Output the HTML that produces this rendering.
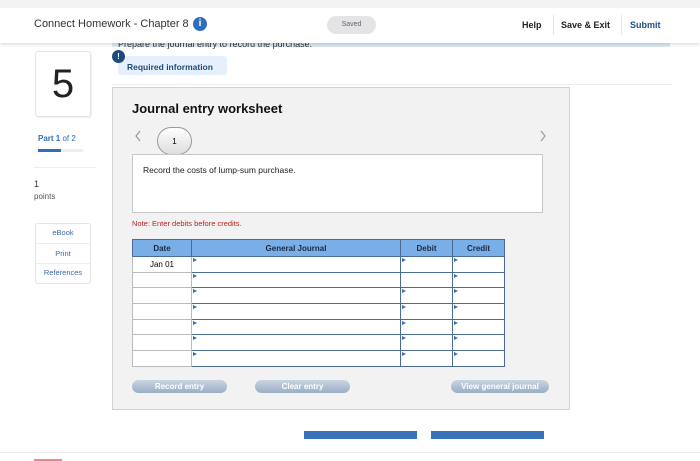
<!DOCTYPE html>
<html><head><style>
*{box-sizing:border-box;margin:0;padding:0}
body{width:700px;height:461px;overflow:hidden;background:#fff;font-family:"Liberation Sans",sans-serif;position:relative}
.a{position:absolute}
.hdr{left:0;top:0;width:700px;height:43px;background:#fff;border-top:8px solid #f3f3f3;box-shadow:0 2px 3px rgba(0,0,0,.12);z-index:2}
td{border:1px solid #4a6b94;height:15.7px;padding:0;position:relative;background:#fff}
td:not(:first-child){border-width:1.5px}
.tri{position:absolute;left:1px;top:1px;width:0;height:0;border-left:4px solid #3b6fb0;border-top:2px solid transparent;border-bottom:2px solid transparent}
.btn{height:13px;border-radius:7px;background:linear-gradient(#c9d4e2,#9aaec6);color:#fff;font-size:8px;font-weight:bold;text-align:center;line-height:13px}
</style></head><body>
<div class="a hdr">
 <div class="a" style="left:34px;top:10px;font-size:11px;color:#333">Connect Homework - Chapter 8</div>
 <div class="a" style="left:193px;top:9px;width:14px;height:14px;border-radius:50%;background:#2f6fba;color:#fff;font-size:10px;font-weight:bold;text-align:center;line-height:14px">i</div>
 <div class="a" style="left:327px;top:8px;width:49px;height:18px;border-radius:9px;background:#e4e4e6;color:#666;font-size:7px;text-align:center;line-height:18px">Saved</div>
 <div class="a" style="left:522px;top:12px;font-size:9px;font-weight:bold;color:#222">Help</div>
 <div class="a" style="left:553px;top:7px;width:1px;height:20px;background:#e5e5e5"></div>
 <div class="a" style="left:561px;top:12px;font-size:9px;font-weight:bold;color:#222">Save &amp; Exit</div>
 <div class="a" style="left:621px;top:7px;width:1px;height:20px;background:#e5e5e5"></div>
 <div class="a" style="left:630px;top:12px;font-size:9px;font-weight:bold;color:#1f4f8a">Submit</div>
</div>
<div class="a" style="left:112px;top:41px;width:558px;height:6px;background:#dbe9f6"></div>
<div class="a" style="left:118px;top:39px;font-size:9px;color:#333">Prepare the journal entry to record the purchase.</div>
<div class="a" style="left:118px;top:56px;width:109px;height:19px;background:#e6f0fa;border-radius:3px;font-size:8.5px;font-weight:bold;color:#1f4a7e;padding:6px 0 0 9px">Required information</div>
<div class="a" style="left:112px;top:50px;width:13px;height:13px;border-radius:50%;background:#1f4a7e;color:#fff;font-size:8px;font-weight:bold;text-align:center;line-height:13px">!</div>
<div class="a" style="left:112px;top:84px;width:560px;height:1px;background:#eee"></div>
<div class="a" style="left:35px;top:51px;width:56px;height:66px;border:1px solid #e4e4e4;border-radius:3px;box-shadow:1px 1px 1px #eee;font-size:40px;color:#222;text-align:center;line-height:64px">5</div>
<div class="a" style="left:38px;top:134px;font-size:8px;color:#2f6fba"><b>Part 1</b> of 2</div>
<div class="a" style="left:38px;top:149px;width:45px;height:3px;background:#eee"></div>
<div class="a" style="left:38px;top:149px;width:23px;height:3px;background:#2f6fba"></div>
<div class="a" style="left:34px;top:167px;width:62px;height:1px;background:#eee"></div>
<div class="a" style="left:34px;top:179px;font-size:9px;color:#333">1</div>
<div class="a" style="left:34px;top:192px;font-size:8px;color:#555">points</div>
<div class="a" style="left:35px;top:223px;width:56px;height:61px;border:1px solid #e4e4e4;border-radius:3px;font-size:7.5px;color:#3a6aa8;text-align:center">
 <div style="height:20px;line-height:18px;border-bottom:1px solid #eee">eBook</div>
 <div style="height:20px;line-height:20px;border-bottom:1px solid #eee">Print</div>
 <div style="line-height:18px">References</div>
</div>
<div class="a" style="left:112px;top:87px;width:458px;height:323px;background:#f2f2f2;border:1px solid #d3d3d3"></div>
<div class="a" style="left:132px;top:101px;font-size:13px;font-weight:bold;color:#111">Journal entry worksheet</div>
<svg class="a" style="left:134px;top:130px" width="8" height="12"><path d="M6 1L2 6l4 5" fill="none" stroke="#999" stroke-width="1.2"/></svg>
<svg class="a" style="left:539px;top:130px" width="8" height="12"><path d="M2 1l4 5-4 5" fill="none" stroke="#999" stroke-width="1.2"/></svg>
<div class="a" style="left:157px;top:127px;width:35px;height:28px;border-radius:14px;border:1px solid #999;background:linear-gradient(#fff,#ddd);font-size:8px;text-align:center;line-height:28px">1</div>
<div class="a" style="left:132px;top:154px;width:411px;height:59px;background:#fff;border:1px solid #c8c8c8;font-size:8.5px;color:#222;padding:10px 0 0 10px">Record the costs of lump-sum purchase.</div>
<div class="a" style="left:132px;top:219px;font-size:7.5px;color:#b22">Note: Enter debits before credits.</div>
<table class="a" style="left:132px;top:239px;width:373px;border-collapse:collapse;font-size:8px">
<tr style="background:#7aaee6"><th style="width:59px;height:17px;border:1px solid #4a6b94;color:#1a2a44">Date</th><th style="width:209px;border:1px solid #4a6b94;color:#1a2a44">General Journal</th><th style="width:52px;border:1px solid #4a6b94;color:#1a2a44">Debit</th><th style="border:1px solid #4a6b94;color:#1a2a44">Credit</th></tr>
<tr><td style="text-align:center;border-color:#bbb">Jan 01</td><td><i class="tri"></i></td><td><i class="tri"></i></td><td><i class="tri"></i></td></tr>
<tr><td style="border-color:#bbb"></td><td><i class="tri"></i></td><td></td><td><i class="tri"></i></td></tr>
<tr><td style="border-color:#bbb"></td><td><i class="tri"></i></td><td><i class="tri"></i></td><td><i class="tri"></i></td></tr>
<tr><td style="border-color:#bbb"></td><td><i class="tri"></i></td><td><i class="tri"></i></td><td><i class="tri"></i></td></tr>
<tr><td style="border-color:#bbb"></td><td><i class="tri"></i></td><td><i class="tri"></i></td><td><i class="tri"></i></td></tr>
<tr><td style="border-color:#bbb"></td><td><i class="tri"></i></td><td><i class="tri"></i></td><td><i class="tri"></i></td></tr>
<tr><td style="border-color:#bbb"></td><td><i class="tri"></i></td><td><i class="tri"></i></td><td><i class="tri"></i></td></tr>
</table>
<div class="a btn" style="left:132px;top:380px;width:95px">Record entry</div>
<div class="a btn" style="left:255px;top:380px;width:95px">Clear entry</div>
<div class="a btn" style="left:451px;top:380px;width:98px">View general journal</div>
<div class="a" style="left:304px;top:431px;width:113px;height:8px;background:#3a72b8"></div>
<div class="a" style="left:431px;top:431px;width:113px;height:8px;background:#3a72b8"></div>
<div class="a" style="left:0;top:452px;width:700px;height:1px;background:#eee"></div>
<div class="a" style="left:34px;top:459px;width:28px;height:2px;background:#e88"></div>
</body></html>
